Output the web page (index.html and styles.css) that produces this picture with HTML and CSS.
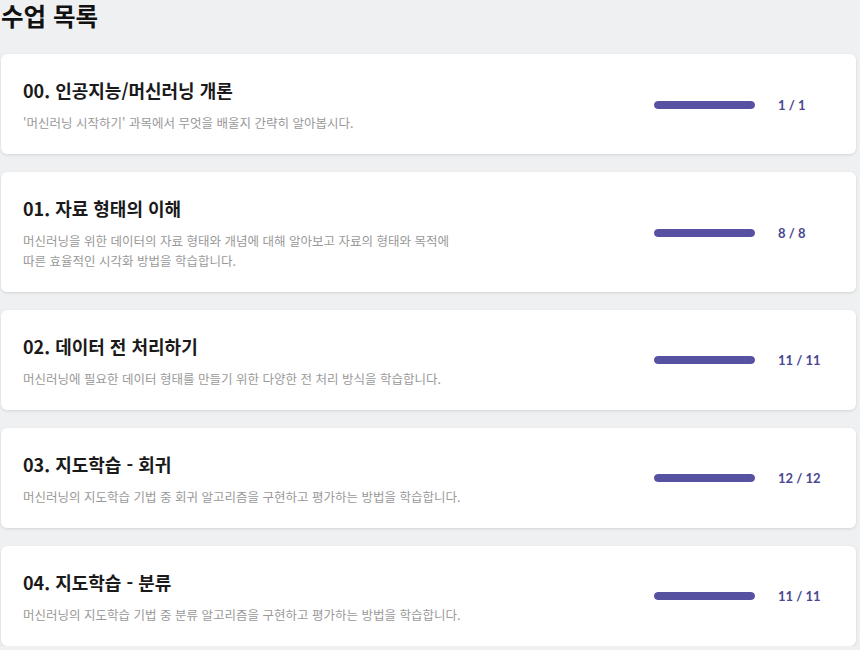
FILE: index.html
```html
<!DOCTYPE html>
<html lang="ko">
<head>
<meta charset="utf-8">
<link rel="stylesheet" href="styles.css">
</head>
<body>
<div class="page">
  <h1 class="page-title">수업 목록</h1>
  <ul class="lesson-list">
    <li class="lesson-card">
      <div class="lesson-text">
        <h2 class="lesson-title">00. 인공지능/머신러닝 개론</h2>
        <p class="lesson-desc">'머신러닝 시작하기' 과목에서 무엇을 배울지 간략히 알아봅시다.</p>
      </div>
      <div class="lesson-progress">
        <div class="bar"><div class="bar-fill" style="width:100%"></div></div>
        <span class="count">1 / 1</span>
      </div>
    </li>
    <li class="lesson-card">
      <div class="lesson-text">
        <h2 class="lesson-title">01. 자료 형태의 이해</h2>
        <p class="lesson-desc">머신러닝을 위한 데이터의 자료 형태와 개념에 대해 알아보고 자료의 형태와 목적에 따른 효율적인 시각화 방법을 학습합니다.</p>
      </div>
      <div class="lesson-progress">
        <div class="bar"><div class="bar-fill" style="width:100%"></div></div>
        <span class="count">8 / 8</span>
      </div>
    </li>
    <li class="lesson-card">
      <div class="lesson-text">
        <h2 class="lesson-title">02. 데이터 전 처리하기</h2>
        <p class="lesson-desc">머신러닝에 필요한 데이터 형태를 만들기 위한 다양한 전 처리 방식을 학습합니다.</p>
      </div>
      <div class="lesson-progress">
        <div class="bar"><div class="bar-fill" style="width:100%"></div></div>
        <span class="count">11 / 11</span>
      </div>
    </li>
    <li class="lesson-card">
      <div class="lesson-text">
        <h2 class="lesson-title">03. 지도학습 - 회귀</h2>
        <p class="lesson-desc">머신러닝의 지도학습 기법 중 회귀 알고리즘을 구현하고 평가하는 방법을 학습합니다.</p>
      </div>
      <div class="lesson-progress">
        <div class="bar"><div class="bar-fill" style="width:100%"></div></div>
        <span class="count">12 / 12</span>
      </div>
    </li>
    <li class="lesson-card">
      <div class="lesson-text">
        <h2 class="lesson-title">04. 지도학습 - 분류</h2>
        <p class="lesson-desc">머신러닝의 지도학습 기법 중 분류 알고리즘을 구현하고 평가하는 방법을 학습합니다.</p>
      </div>
      <div class="lesson-progress">
        <div class="bar"><div class="bar-fill" style="width:100%"></div></div>
        <span class="count">11 / 11</span>
      </div>
    </li>
  </ul>
</div>
</body>
</html>
```
FILE: styles.css
```css
* { box-sizing: border-box; }
html, body {
  margin: 0;
  background: #eff0f2;
  font-family: "Noto Sans CJK KR", "Noto Sans", sans-serif;
}
.page {
  padding: 0 4px 0 1px;
}
.page-title {
  margin: 0;
  font-size: 24.5px;
  line-height: 32px;
  font-weight: 700;
  color: #111;
}
.lesson-list {
  list-style: none;
  margin: 22px 0 0;
  padding: 0;
  display: flex;
  flex-direction: column;
  gap: 18px;
}
.lesson-card {
  background: #fff;
  border-radius: 6px;
  box-shadow: 0 1px 3px rgba(0,0,0,0.12);
  display: flex;
  align-items: center;
  justify-content: space-between;
  padding: 23px 22px 21.5px 22px;
}
.lesson-text {
  width: 450px;
}
.lesson-title {
  margin: 0;
  font-size: 18px;
  line-height: 27px;
  font-weight: 700;
  color: #1a1a1a;
}
.lesson-desc {
  margin: 9px 0 0;
  font-size: 12.5px;
  line-height: 19.5px;
  color: #999;
  word-break: keep-all;
}
.lesson-progress {
  display: flex;
  align-items: center;
  gap: 23px;
}
.bar {
  width: 101px;
  height: 8px;
  border-radius: 4px;
  background: #e6e6ef;
  overflow: hidden;
}
.bar-fill {
  height: 100%;
  background: #5751a1;
  border-radius: 4px;
}
.count {
  width: 56px;
  font-family: Lato, "Noto Sans", sans-serif;
  font-weight: 700;
  font-size: 13px;
  color: #4b4791;
}
```
